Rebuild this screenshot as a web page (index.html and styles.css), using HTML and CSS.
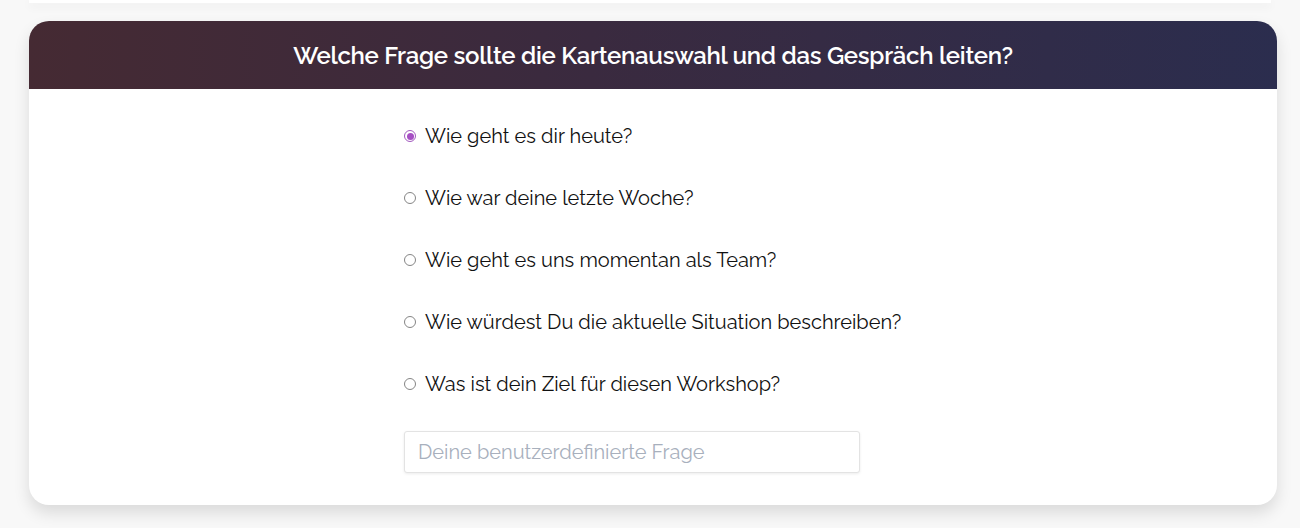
FILE: index.html
```html
<!DOCTYPE html>
<html lang="de">
<head>
<meta charset="utf-8">
<link rel="stylesheet" href="styles.css">
</head>
<body>
<div class="top-card"></div>
<section class="card">
  <header class="card-header">
    <h2 class="card-title">Welche Frage sollte die Kartenauswahl und das Gespräch leiten?</h2>
  </header>
  <div class="card-body">
    <form class="question-list">
      <label class="option"><input type="radio" name="q" class="radio" checked><span>Wie geht es dir heute?</span></label>
      <label class="option"><input type="radio" name="q" class="radio"><span>Wie war deine letzte Woche?</span></label>
      <label class="option"><input type="radio" name="q" class="radio"><span>Wie geht es uns momentan als Team?</span></label>
      <label class="option"><input type="radio" name="q" class="radio"><span>Wie würdest Du die aktuelle Situation beschreiben?</span></label>
      <label class="option"><input type="radio" name="q" class="radio"><span>Was ist dein Ziel für diesen Workshop?</span></label>
      <input type="text" class="custom-input" placeholder="Deine benutzerdefinierte Frage">
    </form>
  </div>
</section>
</body>
</html>
```
FILE: styles.css
```css
* { box-sizing: border-box; }
html, body { margin: 0; padding: 0; }
body {
  background: #f8f8f8;
  font-family: "Raleway", "Lato", "Noto Sans", sans-serif;
  color: #111;
  width: 1300px;
  height: 528px;
  overflow: hidden;
}
.top-card {
  height: 3px;
  margin: 0 29px;
  background: #fff;
  box-shadow: 0 3px 10px rgba(0,0,0,0.08);
}
.card {
  margin: 18px 23px 0 29px;
  width: 1248px;
  background: #fff;
  border-radius: 20px;
  box-shadow: 0 8px 16px rgba(0,0,0,0.12);
  overflow: hidden;
}
.card-header {
  height: 68px;
  display: flex;
  align-items: center;
  justify-content: center;
  background: linear-gradient(90deg, #452a33 0%, #3a2a3f 45%, #2b2d4e 100%);
}
.card-title {
  margin: 0;
  color: #fff;
  font-size: 24px;
  font-weight: 600;
  letter-spacing: -0.28px;
}
.card-body {
  padding: 16px 0 32px;
  display: flex;
  justify-content: center;
}
.question-list {
  width: 498px;
  display: flex;
  flex-direction: column;
}
.option {
  height: 62px;
  display: flex;
  align-items: center;
  gap: 9px;
  font-size: 20px;
  cursor: pointer;
}
.radio {
  appearance: none;
  -webkit-appearance: none;
  margin: 0;
  width: 12px;
  height: 12px;
  border: 1px solid #858585;
  border-radius: 50%;
  background: #fff;
  display: grid;
  place-items: center;
  flex: none;
}
.radio:checked {
  border-color: #a259bf;
}
.radio:checked::after {
  content: "";
  width: 7px;
  height: 7px;
  border-radius: 50%;
  background: #a64fc4;
}
.custom-input {
  margin-top: 16px;
  width: 456px;
  height: 42px;
  border: 1px solid #e3e3e3;
  border-radius: 3px;
  box-shadow: 0 1px 3px rgba(0,0,0,0.08);
  padding: 0 13px;
  font-family: inherit;
  font-size: 20px;
  color: #111;
}
.custom-input::placeholder { color: #a8b0bd; }
```
